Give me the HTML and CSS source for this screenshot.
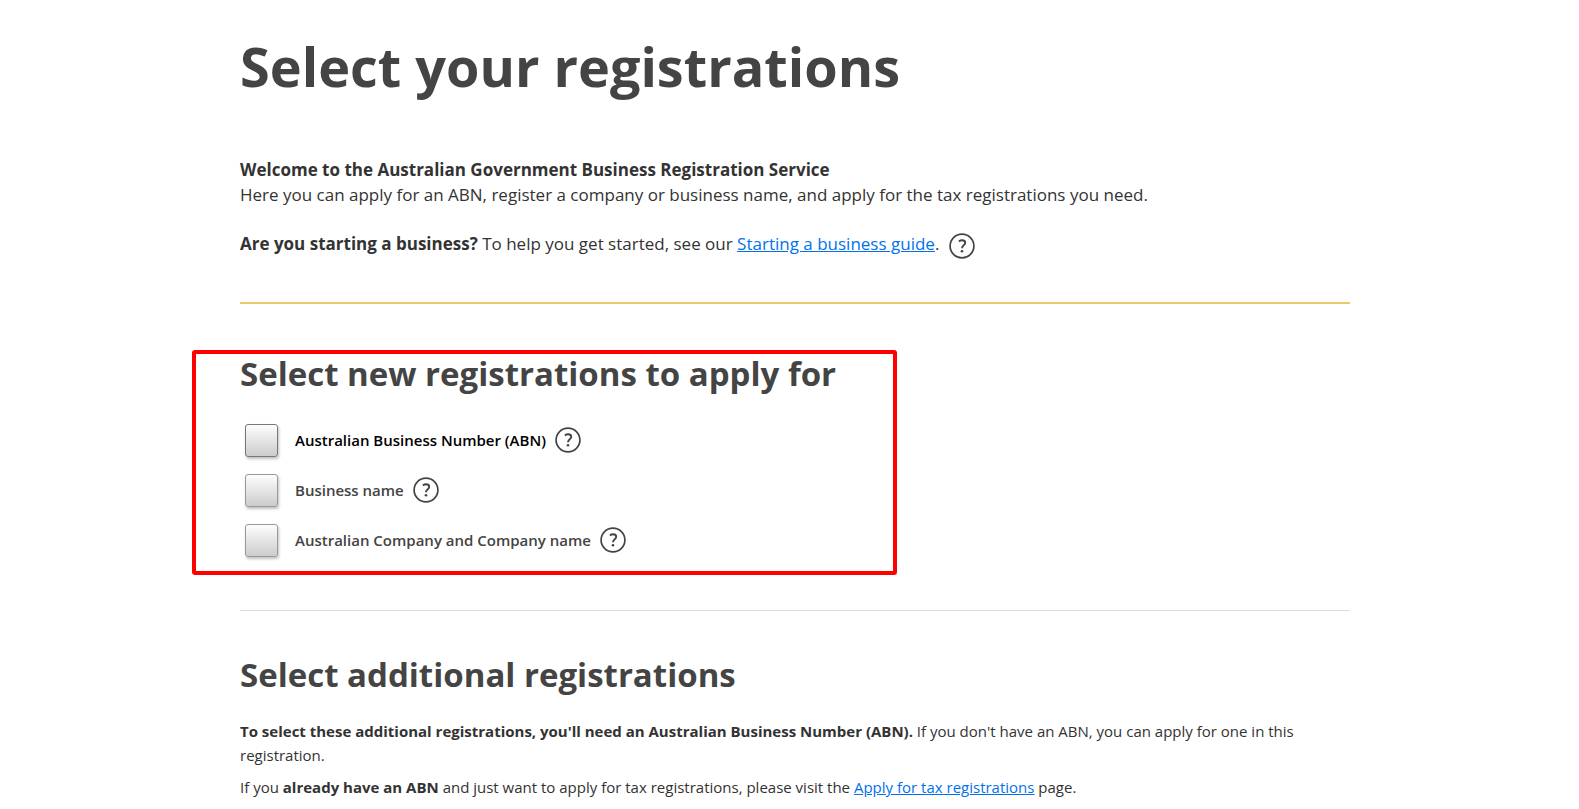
FILE: index.html
```html
<!DOCTYPE html>
<html lang="en">
<head>
<meta charset="utf-8">
<title>Select your registrations</title>
<link rel="stylesheet" href="styles.css">
</head>
<body>
<svg class="sprite" aria-hidden="true">
  <symbol id="help" viewBox="0 0 26 26">
    <circle cx="13" cy="13" r="11.9" fill="none" stroke="currentColor" stroke-width="1.7"/>
    <path d="M9.9 8.500c.9-.8 2-1.200 3.200-1.200 1.900 0 3.100 1 3.100 2.500 0 1.300-.7 1.900-1.700 2.700-1.100.9-1.500 1.400-1.500 2.800" fill="none" stroke="currentColor" stroke-width="1.900"/>
    <circle cx="13" cy="18.200" r="1.300" fill="currentColor"/>
  </symbol>
</svg>
<main class="page">
  <h1 class="title">Select your registrations</h1>
  <section class="intro">
    <p><strong>Welcome to the Australian Government Business Registration Service</strong><br>Here you can apply for an ABN, register a company or business name, and apply for the tax registrations you need.</p>
    <p class="intro-guide"><span><strong>Are you starting a business?</strong> To help you get started, see our <a href="#guide">Starting a business guide</a>.</span>
      <button class="help" type="button" aria-label="Help"><svg><use href="#help"/></svg></button></p>
  </section>
  <section class="choices">
    <div class="marker" aria-hidden="true"></div>
    <h2 class="heading">Select new registrations to apply for</h2>
    <div class="choice choice-active">
      <input type="checkbox" id="abn"><label for="abn">Australian Business Number (ABN)</label>
      <button class="help" type="button" aria-label="Help"><svg><use href="#help"/></svg></button>
    </div>
    <div class="choice">
      <input type="checkbox" id="bn"><label for="bn">Business name</label>
      <button class="help" type="button" aria-label="Help"><svg><use href="#help"/></svg></button>
    </div>
    <div class="choice">
      <input type="checkbox" id="acn"><label for="acn">Australian Company and Company name</label>
      <button class="help" type="button" aria-label="Help"><svg><use href="#help"/></svg></button>
    </div>
  </section>
  <section class="additional">
    <h2 class="heading">Select additional registrations</h2>
    <p><strong>To select these additional registrations, you'll need an Australian Business Number (ABN).</strong> If you don't have an ABN, you can apply for one in this registration.</p>
    <p>If you <strong>already have an ABN</strong> and just want to apply for tax registrations, please visit the <a href="#tax">Apply for tax registrations</a> page.</p>
  </section>
</main>
</body>
</html>
```

FILE: styles.css
```css
* { box-sizing: border-box; }
body {
  margin: 0;
  background: #fff;
  color: #333;
  font-family: "Segoe UI", "Open Sans", "Noto Sans", sans-serif;
  font-size: 17px;
  line-height: 25px;
}
.sprite { position: absolute; width: 0; height: 0; }
.page { padding: 26px 14.5% 0 15.2%; }
.title {
  margin: 0;
  color: #444;
  font-size: 54px;
  line-height: 80px;
  font-weight: 700;
}
p { margin: 0; }
a { color: #0072ee; }
strong { font-weight: 700; }
.intro {
  padding: 51px 0 43px;
  border-bottom: 2px solid #edc869;
}
.intro-guide {
  display: flex;
  align-items: flex-end;
  gap: 10px;
  margin-top: 24px;
}
.intro-guide span { padding-bottom: 3px; }
.help {
  display: block;
  width: 26px;
  height: 26px;
  padding: 0;
  border: 0;
  background: none;
  color: #444;
}
.help svg { display: block; width: 26px; height: 26px; }
.heading {
  margin: 0;
  color: #444;
  font-size: 33px;
  line-height: 48px;
  font-weight: 700;
}
.choices {
  position: relative;
  padding: 46px 0 45px;
  border-bottom: 1px solid #ddd;
}
.marker {
  position: absolute;
  top: 46px;
  left: -48px;
  width: 705px;
  height: 225px;
  border: 4px solid #f00;
  border-radius: 3px;
  pointer-events: none;
}
.choice {
  display: flex;
  align-items: center;
  height: 50px;
  padding-left: 5px;
  color: #444;
  font-size: 15px;
  font-weight: 600;
}
.heading + .choice { margin-top: 17px; }
.choice-active { color: #000; }
.choice input {
  appearance: none;
  width: 33px;
  height: 33px;
  margin: 0 17px 0 0;
  border: 1px solid #999;
  border-radius: 3px;
  background: linear-gradient(#fdfdfd, #ccc);
  box-shadow: 1px 2px 3px rgba(0, 0, 0, .25);
}
.choice-active input { border-color: #777; }
.choice label { margin-right: 9px; }
.additional { padding-top: 40px; font-size: 15px; line-height: 24px; }
.additional p { margin-top: 8px; }
.additional .heading + p { margin-top: 20px; }
```
